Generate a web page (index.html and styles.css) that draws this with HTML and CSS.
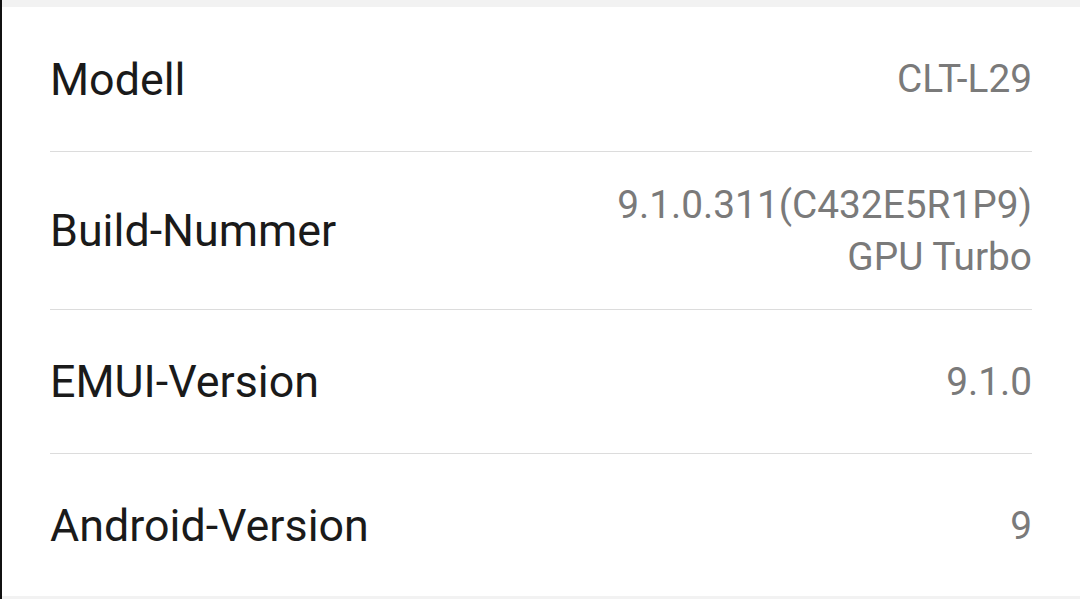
FILE: index.html
```html
<!DOCTYPE html>
<html lang="de">
<head>
    <meta charset="UTF-8">
    <meta name="viewport" content="width=device-width, initial-scale=1.0">
    <link rel="stylesheet" href="styles.css">
    <title>Über das Telefon</title>
</head>
<body>

    <div class="screen">
        <div class="list">
            <div class="row">
                <span class="label">Modell</span>
                <span class="value">CLT-L29</span>
            </div>
            <div class="row tall">
                <span class="label">Build-Nummer</span>
                <span class="value">9.1.0.311(C432E5R1P9)<br>GPU Turbo</span>
            </div>
            <div class="row">
                <span class="label">EMUI-Version</span>
                <span class="value">9.1.0</span>
            </div>
            <div class="row last">
                <span class="label">Android-Version</span>
                <span class="value">9</span>
            </div>
        </div>
    </div>

</body>
</html>
```

FILE: styles.css
```css
html, body {
    height: 100%;
}

body {
    font-family: 'Roboto', 'Noto Sans', sans-serif;
    background-color: #f2f2f2;
    margin: 0;
    padding: 0;
    box-sizing: border-box;
}

.screen {
    height: 100%;
    padding: 7px 0 3px 0;
    box-sizing: border-box;
    border-left: 2px solid #111;
}

.list {
    height: 100%;
    background-color: #fff;
    padding: 0 48px 0 48px;
    box-sizing: border-box;
}

.row {
    display: flex;
    justify-content: space-between;
    align-items: center;
    height: 144px;
    border-bottom: 1px solid #dcdcdc;
    box-sizing: border-box;
}

.row:first-child {
    height: 145px;
}

.row.tall {
    height: 158px;
}

.row.last {
    border-bottom: none;
    height: 143px;
}

.label {
    font-size: 44.8px;
    color: #1a1a1a;
}

.value {
    font-size: 38.8px;
    color: #7a7a7a;
    text-align: right;
    line-height: 52px;
}
```
